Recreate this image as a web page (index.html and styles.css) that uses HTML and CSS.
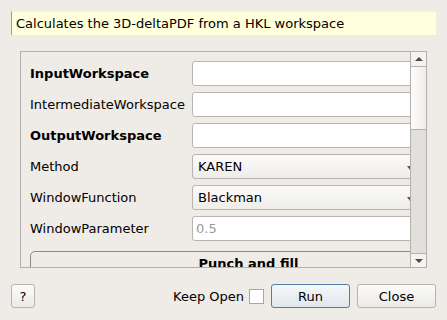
FILE: index.html
```html
<!DOCTYPE html>
<html lang="en">
<head>
  <meta charset="UTF-8">
  <title>PDF3D Algorithm</title>
  <link rel="stylesheet" href="styles.css">
</head>
<body>
  <div class="dialog">
    <div class="description">Calculates the 3D-deltaPDF from a HKL workspace</div>

    <div class="scroll-frame">
      <div class="scroll-view">
        <div class="properties">
          <div class="prop-row">
            <span class="prop-label mandatory">InputWorkspace</span>
            <input class="prop-input" type="text">
          </div>
          <div class="prop-row">
            <span class="prop-label">IntermediateWorkspace</span>
            <input class="prop-input" type="text">
          </div>
          <div class="prop-row">
            <span class="prop-label mandatory">OutputWorkspace</span>
            <input class="prop-input" type="text">
          </div>
          <div class="prop-row">
            <span class="prop-label">Method</span>
            <div class="prop-combo">KAREN<span class="combo-arrow"></span></div>
          </div>
          <div class="prop-row">
            <span class="prop-label">WindowFunction</span>
            <div class="prop-combo">Blackman<span class="combo-arrow"></span></div>
          </div>
          <div class="prop-row">
            <span class="prop-label">WindowParameter</span>
            <input class="prop-input" type="text" placeholder="0.5">
          </div>
          <div class="group-box">
            <div class="group-title">Punch and fill</div>
          </div>
        </div>
      </div>
      <div class="scrollbar">
        <div class="scroll-btn"><span class="arrow-up"></span></div>
        <div class="scroll-handle"></div>
        <div class="scroll-track"></div>
        <div class="scroll-btn bottom"><span class="arrow-down"></span></div>
      </div>
    </div>

    <div class="button-bar">
      <button class="button help">?</button>
      <div class="spacer"></div>
      <label class="keep-open">Keep Open <span class="checkbox"></span></label>
      <button class="button primary">Run</button>
      <button class="button">Close</button>
    </div>
  </div>
</body>
</html>
```

FILE: styles.css
```css
body {
  margin: 0;
  background-color: #efebe7;
  font-family: "DejaVu Sans", sans-serif;
  font-size: 12px;
  color: #000;
}

.dialog {
  display: flex;
  flex-direction: column;
  width: 447px;
  height: 320px;
  box-sizing: border-box;
  padding: 11px 11px 12px 11px;
}

.description {
  height: 24px;
  box-sizing: border-box;
  background-color: #ffffdc;
  border-left: 1px solid #9c9a94;
  border-top: 1px solid #f4f2e4;
  padding: 4px 0 0 4px;
  font-size: 13px;
  line-height: 16px;
}

.scroll-frame {
  display: flex;
  margin: 16px 9px 0 9px;
  height: 217px;
  border: 1px solid #b4b1ac;
  box-sizing: border-box;
}

.scroll-view {
  flex: 1;
  overflow: hidden;
}

.properties {
  display: flex;
  flex-direction: column;
  gap: 6px;
  padding: 9px 0 0 9px;
  width: 437px;
}

.prop-row {
  display: flex;
  align-items: center;
  height: 25px;
}

.prop-label {
  width: 162px;
  flex-shrink: 0;
  font-size: 13px;
}

.mandatory {
  font-weight: bold;
}

.prop-input,
.prop-combo {
  width: 260px;
  flex-shrink: 0;
  height: 25px;
  box-sizing: border-box;
  border: 1px solid #b8b5b0;
  border-radius: 3px;
  font-family: "DejaVu Sans", sans-serif;
  font-size: 13px;
  padding: 0 3px;
  margin: 0;
  background-color: #fff;
  outline: none;
}

.prop-input::placeholder {
  color: #9a9a9a;
}

.prop-combo {
  display: flex;
  align-items: center;
  padding-left: 5px;
  background: linear-gradient(#fbfbfa, #efedea);
  position: relative;
}

.combo-arrow {
  position: absolute;
  left: 214px;
  top: 11px;
  border-left: 3px solid transparent;
  border-right: 3px solid transparent;
  border-top: 4px solid #555;
}

.group-box {
  margin-top: 4px;
  height: 40px;
  border: 1px solid #8e8b86;
  border-radius: 5px;
  text-align: center;
}

.group-title {
  font-weight: bold;
  font-size: 13px;
  padding-top: 4px;
}

.scrollbar {
  display: flex;
  flex-direction: column;
  width: 15px;
  border-left: 1px solid #b4b1ac;
  background-color: #e2e0dd;
}

.scroll-btn {
  height: 14px;
  border-bottom: 1px solid #b4b1ac;
  background-color: #f4f3f1;
  display: flex;
  align-items: center;
  justify-content: center;
}

.scroll-btn.bottom {
  border-bottom: none;
  border-top: 1px solid #b4b1ac;
  height: 13px;
}

.arrow-up {
  border-left: 4px solid transparent;
  border-right: 4px solid transparent;
  border-bottom: 4px solid #4a4a4a;
}

.arrow-down {
  border-left: 4px solid transparent;
  border-right: 4px solid transparent;
  border-top: 4px solid #4a4a4a;
}

.scroll-handle {
  height: 62px;
  border-bottom: 1px solid #b4b1ac;
  background: linear-gradient(to right, #fdfdfc, #eeedeb);
}

.scroll-track {
  flex: 1;
}

.button-bar {
  display: flex;
  align-items: center;
  margin-top: 16px;
  height: 24px;
}

.spacer {
  flex: 1;
}

.button {
  height: 24px;
  width: 79px;
  box-sizing: border-box;
  border: 1px solid #b6b3ae;
  border-radius: 3px;
  background: linear-gradient(#fbfbfa, #eceae7);
  font-family: "DejaVu Sans", sans-serif;
  font-size: 13px;
  color: #000;
  padding: 0;
  margin-left: 7px;
}

.button.help {
  width: 24px;
  margin-left: 0;
}

.button.primary {
  border-color: #4f7fa8;
  background: linear-gradient(#f5f7f9, #e2e7ec);
}

.keep-open {
  display: flex;
  align-items: center;
  gap: 5px;
  font-size: 13px;
}

.checkbox {
  width: 13px;
  height: 13px;
  border: 1px solid #a8a5a0;
  background-color: #fff;
}
```
